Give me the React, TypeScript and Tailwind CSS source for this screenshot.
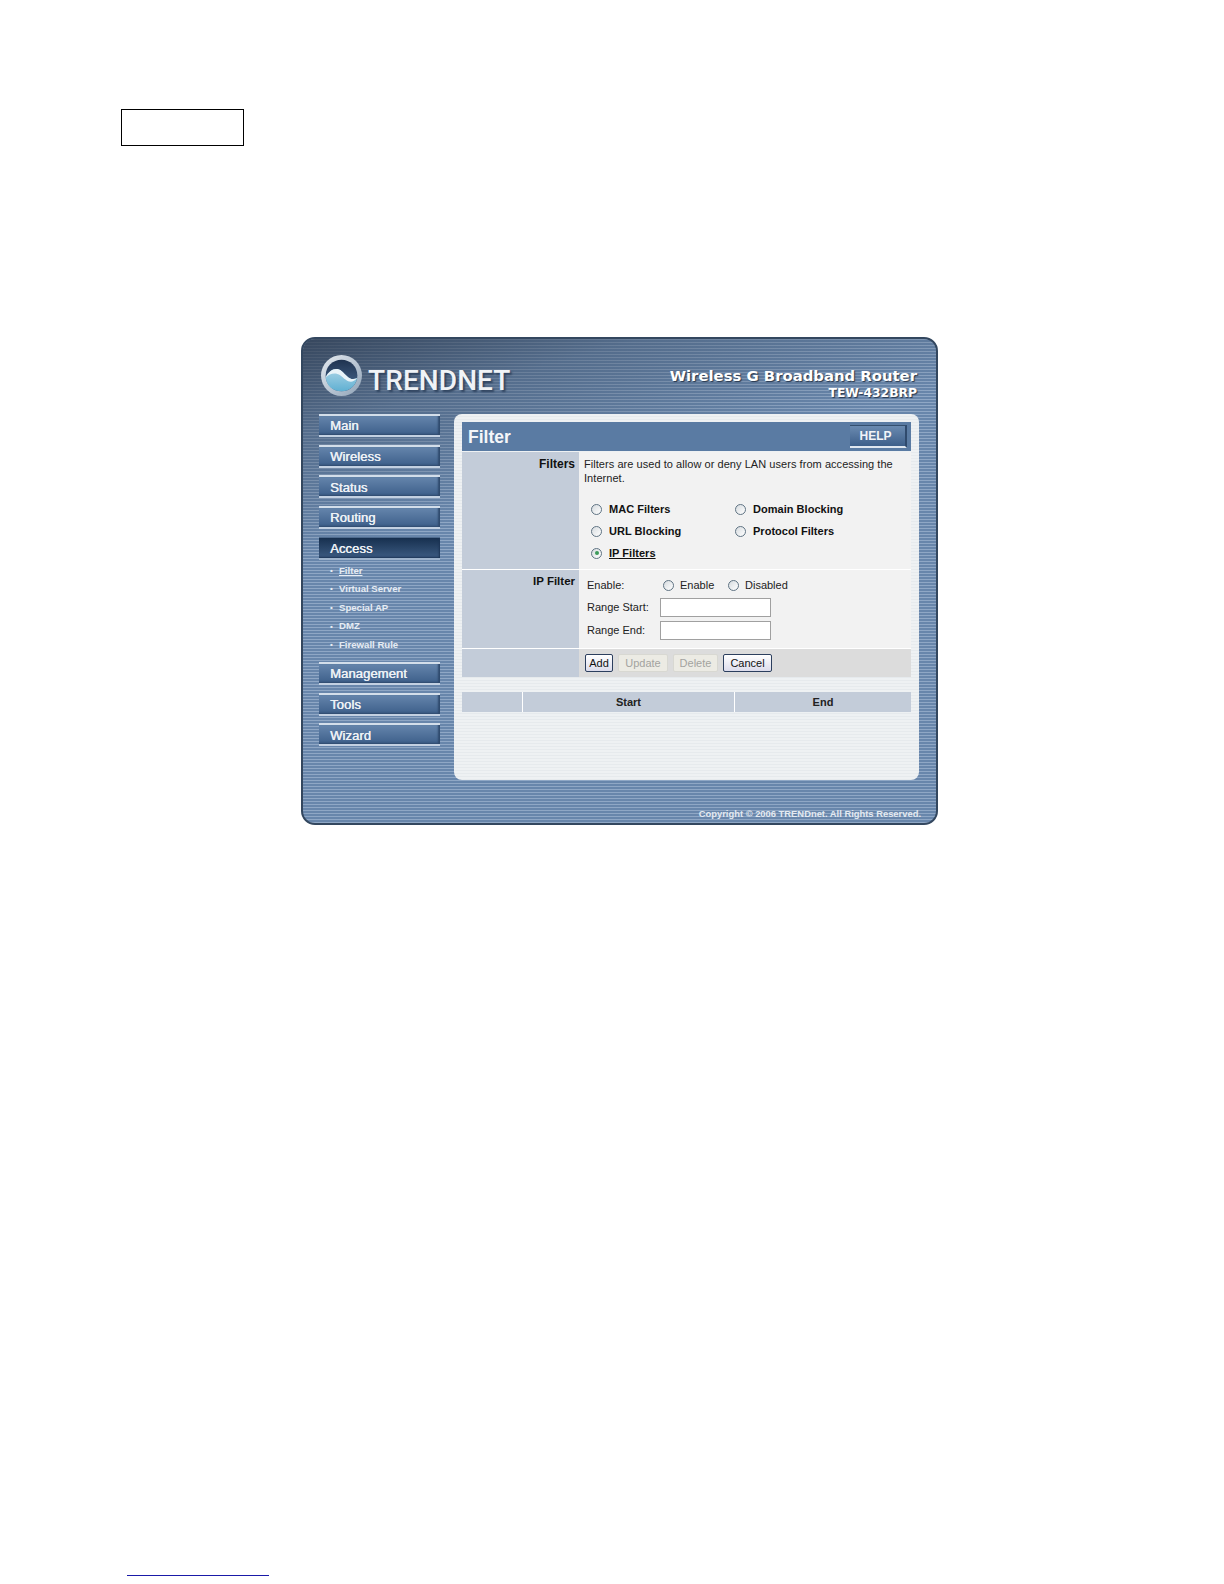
import React from 'react';

const stripes = 'bg-[repeating-linear-gradient(180deg,#8fa7c5_0px,#8fa7c5_1px,#6886ab_1px,#6886ab_3px)]';

const NavButton: React.FC<{ label: string; active?: boolean }> = ({ label, active }) => (
    <div
        className={`h-[23px] w-[121px] flex items-center pl-[11px] pt-[1px] text-[13px] tracking-[0.1px] text-[#eef2f6] [text-shadow:0.4px_0_0_#eef2f6] ${
            active
                ? 'border-t border-t-[#4f6b8e] border-b-2 border-b-[#9fb4cd] bg-[linear-gradient(180deg,#17304f,#3c5b82)] shadow-[inset_-1px_-1px_2px_#1c3454]'
                : 'border-t-2 border-t-[#d3deea] border-b-2 border-b-[#c3d1e2] bg-[linear-gradient(180deg,#6585ac,#3d5f8a)] shadow-[inset_-2px_-1px_2px_#2f4a6d]'
        }`}
    >
        {label}
    </div>
);

const SubItem: React.FC<{ label: string; active?: boolean }> = ({ label, active }) => (
    <div className="h-[18.6px] flex items-center pl-[11px] text-[9.6px] font-bold text-[#e6ecf3]">
        <span className="w-[9px] text-[8px]">•</span>
        <span className={active ? 'underline' : ''}>{label}</span>
    </div>
);

const Radio: React.FC<{ checked?: boolean }> = ({ checked }) => (
    <span className="w-[11px] h-[11px] rounded-full border border-[#5f7383] bg-[linear-gradient(135deg,#d6dbdf,#ffffff)] flex items-center justify-center shrink-0">
        {checked && <span className="w-[4px] h-[4px] rounded-full bg-[#3c9a5a]" />}
    </span>
);

const FilterOption: React.FC<{ label: string; checked?: boolean; width?: string }> = ({ label, checked, width }) => (
    <div className={`flex items-center gap-[7px] h-[22px] font-bold text-[#111] tracking-[0.03px] ${width || ''}`}>
        <Radio checked={checked} />
        <span className={checked ? 'underline' : ''}>{label}</span>
    </div>
);

const ActionButton: React.FC<{ label: string; width: string; disabled?: boolean }> = ({ label, width, disabled }) => (
    <button
        className={`h-[18px] rounded-[2px] border flex items-center justify-center text-[11px] ${width} ${
            disabled
                ? 'border-[#d8d8d2] bg-[#ecebe4] text-[#a3a3a0]'
                : 'border-[#2c3f5e] bg-[linear-gradient(180deg,#ffffff,#dcdcec)] text-[#111]'
        }`}
    >
        {label}
    </button>
);

const Logo = () => (
    <svg width="43" height="43" viewBox="0 0 42 42" className="shrink-0">
        <defs>
            <linearGradient id="ring" x1="0" y1="0" x2="1" y2="1">
                <stop offset="0" stopColor="#e6ebf0" />
                <stop offset="0.55" stopColor="#b7c4d2" />
                <stop offset="1" stopColor="#8fa2b6" />
            </linearGradient>
            <linearGradient id="night" x1="0" y1="0" x2="0" y2="1">
                <stop offset="0" stopColor="#1f3350" />
                <stop offset="1" stopColor="#4a6a92" />
            </linearGradient>
            <linearGradient id="sea" x1="0" y1="0" x2="0" y2="1">
                <stop offset="0" stopColor="#a9d3e6" />
                <stop offset="1" stopColor="#5fb0d2" />
            </linearGradient>
        </defs>
        <circle cx="21" cy="21" r="20" fill="url(#ring)" />
        <circle cx="21" cy="21" r="15.5" fill="url(#night)" />
        <path d="M5.6 23 C9 15 16 12.5 21 16.5 C26 20.5 29 27 36.3 23.5 C35 31 29 36.5 21 36.5 C12.5 36.5 6.3 31 5.6 23 Z" fill="url(#sea)" />
        <path d="M5.6 23 C9 15 16 12.5 21 16.5 C26 20.5 29 27 36.3 23.5 C30 31 25 25 20 21 C15 17.5 9.5 19 5.6 23 Z" fill="#e9f3f8" />
    </svg>
);

export default function App() {
    return (
        <div className="w-[1224px] h-[1584px] overflow-hidden bg-white pt-[109px] font-['Liberation_Sans',Arial,sans-serif]">
            <div className="ml-[121px] w-[123px] h-[37px] border border-black" />

            <div className={`mt-[191px] ml-[301px] w-[637px] h-[488px] rounded-[14px] border-2 border-[#33475f] overflow-hidden ${stripes}`}>
                <div className="h-full flex flex-col bg-[linear-gradient(165deg,rgba(38,50,68,0.75)_0%,rgba(60,78,102,0.45)_14%,rgba(101,131,169,0)_34%)]">
                    <div className="h-[75px] shrink-0 pl-[17px] pr-[19px] pt-[15px] flex justify-between">
                        <div className="flex items-start gap-[5px]">
                            <Logo />
                            <span className="mt-[11px] font-['Roboto',sans-serif] text-[28px] leading-[32px] font-medium tracking-[0.1px] text-[#f0f3f6] [text-shadow:2px_2px_2px_#2f435e]">TRENDNET</span>
                        </div>
                        <div className="pt-[13px] flex flex-col items-end text-white font-['DejaVu_Sans',sans-serif] font-bold [text-shadow:1px_1px_1px_#26364c]">
                            <span className="text-[14.85px] leading-[19px]">Wireless G Broadband Router</span>
                            <span className="text-[12.3px] leading-[15px]">TEW-432BRP</span>
                        </div>
                    </div>

                    <div className="flex pl-[16px]">
                        <div className="w-[121px] flex flex-col gap-[7.7px]">
                            <NavButton label="Main" />
                            <NavButton label="Wireless" />
                            <NavButton label="Status" />
                            <NavButton label="Routing" />
                            <NavButton label="Access" active />
                            <div className="-mt-[6px]">
                                <SubItem label="Filter" active />
                                <SubItem label="Virtual Server" />
                                <SubItem label="Special AP" />
                                <SubItem label="DMZ" />
                                <SubItem label="Firewall Rule" />
                            </div>
                            <NavButton label="Management" />
                            <NavButton label="Tools" />
                            <NavButton label="Wizard" />
                        </div>

                        <div className="ml-[14px] w-[465px] h-[366px] rounded-[8px] bg-[repeating-linear-gradient(180deg,#eef1f3_0px,#eef1f3_2px,#e6eaed_2px,#e6eaed_3px)] pt-[8px] pl-[8px] text-[11px] text-[#222]">
                            <div className="w-[449px] h-[29px] bg-[#5a7ba3] flex items-center justify-between pl-[6px] pr-[4px]">
                                <span className="text-[17.5px] pt-[1px] font-bold text-[#f4f6f9]">Filter</span>
                                <span className="w-[57px] h-[23px] flex items-center justify-center pr-[4px] border-r-2 border-r-[#2f4a6d] border-b-2 border-b-[#dfe7f0] border-t border-t-[#35506f] bg-[linear-gradient(180deg,#6a8ab0,#3d5f8a)] text-[12px] font-bold text-[#f1f4f8]">HELP</span>
                            </div>

                            <div className="w-[449px] mt-[1px] grid grid-cols-[117px_332px] bg-white gap-y-[1px]">
                                <div className="h-[117px] bg-[#c3ccd9] pt-[5px] pr-[4px] text-right text-[12px] leading-[14px] font-bold text-[#111]">Filters</div>
                                <div className="h-[117px] bg-[#f2f2f2] pl-[5px] pt-[5px] pr-[12px] leading-[14px] tracking-[0.05px]">
                                    Filters are used to allow or deny LAN users from accessing the Internet.
                                    <div className="mt-[13px] ml-[7px] flex flex-wrap">
                                        <FilterOption label="MAC Filters" width="w-[144px]" />
                                        <FilterOption label="Domain Blocking" />
                                        <FilterOption label="URL Blocking" width="w-[144px]" />
                                        <FilterOption label="Protocol Filters" />
                                        <FilterOption label="IP Filters" checked width="w-[144px]" />
                                    </div>
                                </div>

                                <div className="h-[78px] bg-[#c3ccd9] pt-[4px] pr-[4px] text-right text-[11.5px] leading-[14px] font-bold text-[#111]">IP Filter</div>
                                <div className="h-[78px] bg-[#f2f2f2] pl-[8px] pt-[4px]">
                                    <div className="flex items-center h-[22px]">
                                        <span className="w-[76px]">Enable:</span>
                                        <Radio />
                                        <span className="ml-[6px] w-[48px]">Enable</span>
                                        <Radio />
                                        <span className="ml-[6px]">Disabled</span>
                                    </div>
                                    <div className="flex items-center h-[23px]">
                                        <span className="w-[73px]">Range Start:</span>
                                        <input className="w-[111px] h-[19px] bg-white border border-[#a0a0a0]" />
                                    </div>
                                    <div className="flex items-center h-[23px]">
                                        <span className="w-[73px]">Range End:</span>
                                        <input className="w-[111px] h-[19px] bg-white border border-[#a0a0a0]" />
                                    </div>
                                </div>

                                <div className="h-[28px] bg-[#c3ccd9]" />
                                <div className="h-[28px] bg-[#dcdcdc] pl-[6px] flex items-center gap-[5px]">
                                    <ActionButton label="Add" width="w-[28px]" />
                                    <ActionButton label="Update" width="w-[50px]" disabled />
                                    <ActionButton label="Delete" width="w-[45px]" disabled />
                                    <ActionButton label="Cancel" width="w-[49px]" />
                                </div>
                            </div>

                            <div className="mt-[15px] w-[449px] h-[20px] grid grid-cols-[61px_212px_176px] font-bold text-[#222]">
                                <div className="bg-[#c3ccd9] border-r border-r-white" />
                                <div className="bg-[#c3ccd9] border-r border-r-white flex items-center justify-center">Start</div>
                                <div className="bg-[#c3ccd9] flex items-center justify-center">End</div>
                            </div>
                        </div>
                    </div>

                    <div className="flex-1 flex items-end justify-end pr-[15px] pb-[2px] text-[9.4px] font-bold text-[#e4eaf1]">
                        Copyright © 2006 TRENDnet. All Rights Reserved.
                    </div>
                </div>
            </div>

            <div className="mt-[750px] ml-[127px] w-[142px] h-[1px] bg-[#1a1aa8]" />
        </div>
    );
}
